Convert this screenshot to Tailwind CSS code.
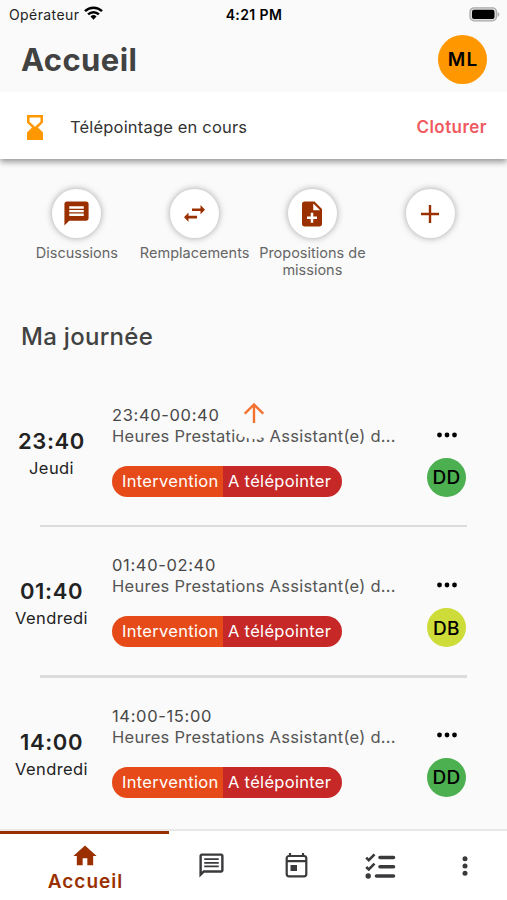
<!DOCTYPE html>
<html lang="fr">
<head>
    <meta charset="UTF-8">
    <meta name="viewport" content="width=device-width, initial-scale=1.0">
    <title>Accueil</title>
    <script src="https://cdn.jsdelivr.net/npm/@tailwindcss/browser@4"></script>
</head>
<body class="bg-[#fafafa] font-['Inter',sans-serif] text-[#424242]">
<div class="relative w-[507px] h-[900px] overflow-hidden flex flex-col whitespace-nowrap">

    <!-- Status bar -->
    <div class="h-7 shrink-0 grid grid-cols-3 items-center pl-[9px] pr-[7px] text-black">
        <div class="flex items-center gap-[5px]">
            <span class="text-[14px] tracking-[0.4px] text-[#222]">Opérateur</span>
            <svg class="w-[19px] h-[14px] -mt-[2px]" viewBox="0 0 19 14" fill="none" stroke="#000" stroke-width="2.5">
                <path d="M1 5.2a12.2 12.2 0 0 1 17 0"/>
                <path d="M4.1 8.4a7.8 7.8 0 0 1 10.8 0"/>
                <path d="M6.5 10.5a4.4 4.4 0 0 1 6 0L9.5 13.7z" fill="#000" stroke="none"/>
            </svg>
        </div>
        <span class="-ml-[1px] text-center text-[14px] font-semibold tracking-[0.4px]">4:21 PM</span>
        <svg class="w-[31px] h-[15px] justify-self-end" viewBox="0 0 31 15">
            <rect x="1" y="0.8" width="26.5" height="13" rx="4" fill="#ddd" stroke="#aaa" stroke-width="1.3"/>
            <rect x="3" y="2.7" width="22.5" height="9.3" rx="2" fill="#000"/>
            <path d="M28.7 5v5q1.6-.8 1.6-2.5T28.7 5z" fill="#aaa"/>
        </svg>
    </div>

    <!-- Title -->
    <div class="relative z-10 bg-[#fafafa] h-16 shrink-0 flex items-center justify-between pl-[21px] pr-5">
        <h1 class="text-[31px] font-bold tracking-[0.4px]">Accueil</h1>
        <div class="size-[49px] rounded-full bg-[#ff9800] flex items-center justify-center text-black text-[19px] font-semibold tracking-[1px] pl-[1px] pt-[2px] -mt-[1px]">ML</div>
    </div>

    <!-- Clocking banner -->
    <div class="h-[67px] shrink-0 bg-white flex items-center pt-[4px] pl-[27px] pr-[20px] shadow-[0_3px_6px_rgba(0,0,0,0.4)]">
        <svg class="w-4 h-[25px]" viewBox="0 0 16 25" fill="#ff9800">
            <path fill-rule="evenodd" d="M0 0h16v7.500l-5 5 5 5V25H0v-7.500l5-5-5-5zM2.500 2.500V6.700L8 11.800l5.500-5.100V2.500z"/>
        </svg>
        <span class="ml-[27px] text-[16.5px] tracking-[0.18px] text-[#333]">Télépointage en cours</span>
        <span class="ml-auto text-[17px] font-semibold tracking-[0.45px] text-[#f05a5f]">Cloturer</span>
    </div>

    <!-- Shortcuts -->
    <div class="h-[160px] shrink-0 grid grid-cols-4 pt-[30px] px-[18px] text-[14.5px] leading-[17px] text-[#666] text-center">
        <div class="flex flex-col items-center gap-[6px]">
            <div class="size-[49px] shrink-0 rounded-full bg-white shadow-[0_0_7px_rgba(0,0,0,0.35)] flex items-center justify-center">
                <svg class="size-[29px]" viewBox="0 0 24 24" fill="#9a3000"><path d="M20 2H4c-1.100 0-1.990.9-1.990 2L2 22l4-4h14c1.100 0 2-.9 2-2V4c0-1.100-.9-2-2-2zm-2 12H6v-2h12v2zm0-3H6V9h12v2zm0-3H6V6h12v2z"/></svg>
            </div>
            <span>Discussions</span>
        </div>
        <div class="flex flex-col items-center gap-[6px]">
            <div class="size-[49px] shrink-0 rounded-full bg-white shadow-[0_0_7px_rgba(0,0,0,0.35)] flex items-center justify-center">
                <svg class="w-[21px] h-[17px]" viewBox="0 0 21 17" fill="#9a3000"><path d="M8 3.400h8.500V0L21 4.700 16.500 9.200V6H8zM13 10.800H4.500V7.600L0 12.200 4.500 16.800v-3.400H13z"/></svg>
            </div>
            <span>Remplacements</span>
        </div>
        <div class="flex flex-col items-center gap-[6px]">
            <div class="size-[49px] shrink-0 rounded-full bg-white shadow-[0_0_7px_rgba(0,0,0,0.35)] flex items-center justify-center">
                <svg class="size-[30px]" viewBox="0 0 24 24" fill="#9a3000"><path d="M14 2H6c-1.100 0-1.990.9-1.990 2L4 20c0 1.100.89 2 1.990 2H18c1.100 0 2-.9 2-2V8l-6-6zm2 14h-3v3h-2v-3H8v-2h3v-3h2v3h3v2zm-3-7V3.500L18.500 9H13z"/></svg>
            </div>
            <span>Propositions de<br>missions</span>
        </div>
        <div class="flex flex-col items-center">
            <div class="size-[49px] shrink-0 rounded-full bg-white shadow-[0_0_7px_rgba(0,0,0,0.35)] flex items-center justify-center">
                <svg class="size-[18px]" viewBox="0 0 18 18" stroke="#9a3000" stroke-width="2.4"><path d="M9 0v18M0 9h18"/></svg>
            </div>
        </div>
    </div>

    <!-- Day -->
    <div class="h-[58px] shrink-0 pl-[21px]">
        <h2 class="text-[24px] leading-9 font-medium tracking-[0.3px]">Ma journée</h2>
    </div>

    <div class="flex-1 min-h-0 overflow-hidden">
        <div class="h-[150.3px] flex relative">
            <div class="w-[103px] pt-[50px] text-center text-[#222]">
                <div class="text-[22px] leading-7 font-semibold tracking-[0.6px]">23:40</div>
                <div class="text-[16.5px] leading-[26px] tracking-[0.4px]">Jeudi</div>
            </div>
            <div class="w-[300px] pl-[9px] pt-[28px] text-[16.5px] leading-[21px] text-[#555]">
                <div class="tracking-[0.65px] text-[#484848]">23:40-00:40</div>
                <div class="tracking-[0.27px]">Heures Prestations Assistant(e) d...</div>
                <div class="mt-[19px] w-[230px] h-[31px] flex rounded-full overflow-hidden text-white leading-[31px] tracking-[0.3px]">
                    <span class="w-[111px] pl-[10px] bg-[#e64a19]">Intervention</span>
                    <span class="flex-1 pl-[5px] bg-[#c62828]">A télépointer</span>
                </div>
            </div>
            <div class="w-[87px] pt-[55px] flex flex-col items-center">
                <svg class="w-5 h-[6px]" viewBox="0 0 20 6"><circle cx="2.5" cy="3" r="2.4"/><circle cx="10" cy="3" r="2.4"/><circle cx="17.5" cy="3" r="2.4"/></svg>
                <div class="mt-[20px] size-[39px] rounded-full bg-[#4caf50] flex items-center justify-center pt-[2px] text-black text-[19px] font-medium tracking-[0.4px]">DD</div>
            </div>
            <div class="absolute left-10 bottom-0 w-[427px] h-[2.5px] bg-[#dcdcdc]"></div>
        </div>
        <div class="h-[150.3px] flex relative">
            <div class="w-[103px] pt-[50px] text-center text-[#222]">
                <div class="text-[22px] leading-7 font-semibold tracking-[0.6px]">01:40</div>
                <div class="text-[16.5px] leading-[26px] tracking-[0.4px]">Vendredi</div>
            </div>
            <div class="w-[300px] pl-[9px] pt-[28px] text-[16.5px] leading-[21px] text-[#555]">
                <div class="tracking-[0.65px] text-[#484848]">01:40-02:40</div>
                <div class="tracking-[0.27px]">Heures Prestations Assistant(e) d...</div>
                <div class="mt-[19px] w-[230px] h-[31px] flex rounded-full overflow-hidden text-white leading-[31px] tracking-[0.3px]">
                    <span class="w-[111px] pl-[10px] bg-[#e64a19]">Intervention</span>
                    <span class="flex-1 pl-[5px] bg-[#c62828]">A télépointer</span>
                </div>
            </div>
            <div class="w-[87px] pt-[55px] flex flex-col items-center">
                <svg class="w-5 h-[6px]" viewBox="0 0 20 6"><circle cx="2.5" cy="3" r="2.4"/><circle cx="10" cy="3" r="2.4"/><circle cx="17.5" cy="3" r="2.4"/></svg>
                <div class="mt-[20px] size-[39px] rounded-full bg-[#cddc39] flex items-center justify-center pt-[2px] text-black text-[19px] font-medium tracking-[0.4px]">DB</div>
            </div>
            <div class="absolute left-10 bottom-0 w-[427px] h-[2.5px] bg-[#dcdcdc]"></div>
        </div>
        <div class="h-[150.3px] flex relative">
            <div class="w-[103px] pt-[50px] text-center text-[#222]">
                <div class="text-[22px] leading-7 font-semibold tracking-[0.6px]">14:00</div>
                <div class="text-[16.5px] leading-[26px] tracking-[0.4px]">Vendredi</div>
            </div>
            <div class="w-[300px] pl-[9px] pt-[28px] text-[16.5px] leading-[21px] text-[#555]">
                <div class="tracking-[0.65px] text-[#484848]">14:00-15:00</div>
                <div class="tracking-[0.27px]">Heures Prestations Assistant(e) d...</div>
                <div class="mt-[19px] w-[230px] h-[31px] flex rounded-full overflow-hidden text-white leading-[31px] tracking-[0.3px]">
                    <span class="w-[111px] pl-[10px] bg-[#e64a19]">Intervention</span>
                    <span class="flex-1 pl-[5px] bg-[#c62828]">A télépointer</span>
                </div>
            </div>
            <div class="w-[87px] pt-[54px] flex flex-col items-center">
                <svg class="w-5 h-[6px]" viewBox="0 0 20 6"><circle cx="2.5" cy="3" r="2.4"/><circle cx="10" cy="3" r="2.4"/><circle cx="17.5" cy="3" r="2.4"/></svg>
                <div class="mt-[20px] size-[39px] rounded-full bg-[#4caf50] flex items-center justify-center pt-[2px] text-black text-[19px] font-medium tracking-[0.4px]">DD</div>
            </div>
        </div>
    </div>

    <!-- Scroll to top button, floats over the list -->
    <div class="absolute left-[228px] top-[387px] size-[52px] rounded-full bg-[#fafafa] flex items-center justify-center">
        <svg class="size-5" viewBox="0 0 20 20" fill="none" stroke="#f4722f" stroke-width="2.4"><path d="M10 20V1.500M.8 10.700L10 1.500l9.200 9.200"/></svg>
    </div>

    <!-- Bottom tabs -->
    <div class="h-[71px] shrink-0 bg-white border-t-2 border-[#e8e8e8] grid grid-cols-[169px_85px_84px_85px_84px] text-[#3a3a3c]">
        <div class="border-t-3 border-[#9a3000] text-[#9a3000] flex flex-col items-center pt-[8px]">
            <svg class="size-7" viewBox="0 0 24 24" fill="currentColor"><path d="M10 20v-6h4v6h5v-8h3L12 3 2 12h3v8z"/></svg>
            <span class="pl-[2px] text-[19px] leading-6 font-semibold tracking-[1px]">Accueil</span>
        </div>
        <div class="flex items-center justify-center">
            <svg class="size-[29px]" viewBox="0 0 24 24" fill="currentColor"><path d="M4 4h16v12H5.170L4 17.170V4m0-2c-1.100 0-1.990.9-1.990 2L2 22l4-4h14c1.100 0 2-.9 2-2V4c0-1.100-.9-2-2-2H4zm2 10h12v1.500H6v-1.500zm0-3h12v1.500H6V9zm0-3h12v1.500H6V6z"/></svg>
        </div>
        <div class="flex items-center justify-center">
            <svg class="w-[23px] h-[26px] -mt-[2px]" viewBox="0 0 23 26" fill="none" stroke="currentColor" stroke-width="2.2">
                <rect x="1.7" y="4" width="19.6" height="20.3" rx="2.3"/>
                <path d="M2 9.200h19M5 1v3M18 1v3"/>
                <rect x="5.5" y="13" width="6.5" height="6" fill="currentColor" stroke="none"/>
            </svg>
        </div>
        <div class="flex items-center justify-center">
            <svg class="w-[31px] h-[26px]" viewBox="0 0 31 26" fill="none" stroke="currentColor" stroke-width="2.6">
                <path d="M1.200 4.600l2.600 2.500L9.500 1.300M1.200 14l2.600 2.500 5.700-5.800"/>
                <path stroke-width="3.6" stroke-linecap="round" d="M15 4.500h13.500M15 13.800h13.500M11.500 23h17"/>
                <circle cx="3.2" cy="23" r="2.7" fill="currentColor" stroke="none"/>
            </svg>
        </div>
        <div class="flex items-center justify-center">
            <svg class="w-[6px] h-5" viewBox="0 0 6 20" fill="currentColor"><circle cx="3" cy="2.7" r="2.5"/><circle cx="3" cy="10" r="2.5"/><circle cx="3" cy="17.3" r="2.5"/></svg>
        </div>
    </div>
</div>
</body>
</html>
